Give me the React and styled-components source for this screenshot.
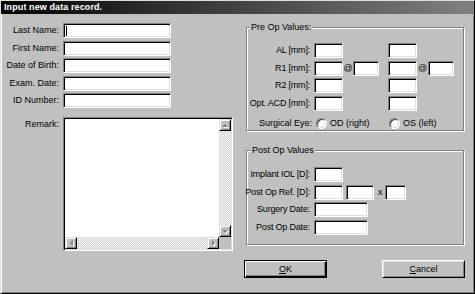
import React from 'react';
import styled, { createGlobalStyle } from 'styled-components';

const GlobalStyle = createGlobalStyle`
  html, body {
    margin: 0;
    padding: 0;
    background: #c0c0c0;
  }
`;

const Window = styled.div`
  box-sizing: border-box;
  width: 475px;
  height: 294px;
  background: #c0c0c0;
  border: 1px solid;
  border-color: #dfdfdf #000 #000 #dfdfdf;
  box-shadow: inset 1px 1px #fff, inset -1px -1px #808080;
  display: flex;
  flex-direction: column;
  font-family: "Liberation Sans", Arial, sans-serif;
  font-size: 9px;
  color: #000;
`;

const TitleBar = styled.div`
  height: 13px;
  line-height: 13px;
  padding-left: 3px;
  background: linear-gradient(90deg, #000 0%, #2a2a2a 30%, #808080 100%);
  color: #fff;
  font-weight: bold;
  font-size: 9px;
  letter-spacing: 0.1px;
  white-space: nowrap;
`;

const Body = styled.div`
  display: flex;
  gap: 13px;
  padding-top: 9px;
`;

const LeftCol = styled.div`
  display: grid;
  grid-template-columns: 58px 170px;
  grid-template-rows: repeat(5, 15px) 134px;
  column-gap: 4px;
  row-gap: 2.5px;
`;

const Label = styled.div`
  display: flex;
  justify-content: flex-end;
  white-space: nowrap;
  line-height: 11px;
  align-self: ${p => (p.$top ? 'start' : 'center')};
  padding-right: ${p => p.$pad || 0}px;
  margin-top: ${p => p.$mt || 0}px;
  letter-spacing: ${p => p.$ls || 0}px;
`;

const Field = styled.div`
  box-sizing: border-box;
  width: ${p => p.$w}px;
  height: 15px;
  background: #fff;
  border: 1px solid;
  border-color: #808080 #fff #fff #808080;
  box-shadow: inset 1px 1px #000, inset -1px -1px #dfdfdf;
  display: flex;
  align-items: center;
  margin-left: ${p => p.$ml || 0}px;
`;

const Caret = styled.span`
  width: 1px;
  height: 10px;
  margin-left: 2px;
  background: #000;
`;

const RemarkBox = styled.div`
  box-sizing: border-box;
  width: 170px;
  height: 134px;
  margin-top: 6.5px;
  padding: 1px;
  background: #fff;
  border: 1px solid;
  border-color: #808080 #fff #fff #808080;
  box-shadow: inset 1px 1px #000, inset -1px -1px #dfdfdf;
  display: grid;
  grid-template-columns: 1fr 12px;
  grid-template-rows: 1fr 12px;
`;

const VScroll = styled.div`
  display: flex;
  flex-direction: column;
`;

const HScroll = styled.div`
  display: flex;
`;

const Track = styled.div`
  flex: 1;
  background: repeating-conic-gradient(#d4d4d4 0 25%, #f4f4f4 0 50%) 0 0 / 2px 2px;
`;

const Corner = styled.div`
  background: #c0c0c0;
`;

const ScrollBtn = styled.div`
  box-sizing: border-box;
  width: 12px;
  height: 12px;
  background: #c0c0c0;
  border: 1px solid;
  border-color: #dfdfdf #000 #000 #dfdfdf;
  box-shadow: inset 1px 1px #fff, inset -1px -1px #808080;
  display: flex;
  align-items: center;
  justify-content: center;
`;

const arrowBorders = {
  up: 'border-left: 3px solid transparent; border-right: 3px solid transparent; border-bottom: 3px solid #808080;',
  down: 'border-left: 3px solid transparent; border-right: 3px solid transparent; border-top: 3px solid #808080;',
  left: 'border-top: 3px solid transparent; border-bottom: 3px solid transparent; border-right: 3px solid #808080;',
  right: 'border-top: 3px solid transparent; border-bottom: 3px solid transparent; border-left: 3px solid #808080;',
};

const Arrow = styled.span`
  width: 0;
  height: 0;
  ${p => arrowBorders[p.$dir]}
  filter: drop-shadow(1px 1px 0 #fff);
`;

const RightCol = styled.div`
  display: flex;
  flex-direction: column;
  width: 218px;
`;

const GroupBox = styled.div`
  position: relative;
  margin-top: ${p => p.$mt}px;
  padding: ${p => p.$pad};
  border: 1px solid #808080;
  box-shadow: inset 1px 1px #fff, 1px 1px #fff;
`;

const Legend = styled.span`
  position: absolute;
  top: -6px;
  left: ${p => p.$left}px;
  padding: 0 1px;
  line-height: 11px;
  background: #c0c0c0;
  white-space: nowrap;
`;

const PreGrid = styled.div`
  display: grid;
  grid-template-columns: 65px 29px 10px 26px 9px 29px 11px 26px;
  grid-template-rows: repeat(4, 15px) 13px;
  row-gap: 2.5px;
`;

const At = styled.div`
  align-self: center;
  text-align: center;
  line-height: 11px;
  font-size: 9px;
`;

const RadioCell = styled.label`
  grid-column: ${p => p.$col};
  display: flex;
  align-items: center;
  gap: 3px;
  padding-left: ${p => p.$pl}px;
  margin-top: 7.5px;
  white-space: nowrap;
`;

const RadioCircle = styled.span`
  box-sizing: border-box;
  width: 11px;
  height: 11px;
  border-radius: 50%;
  background: #fff;
  border: 1px solid;
  border-color: #808080 #fff #fff #808080;
  box-shadow: inset 1px 1px #404040, inset -1px -1px #dfdfdf;
`;

const EyeLabel = styled(Label)`
  margin-top: 7.5px;
`;

const PostGrid = styled.div`
  display: grid;
  grid-template-columns: 65px auto;
  grid-template-rows: repeat(4, 15px);
  row-gap: 2.5px;
`;

const FieldRow = styled.div`
  display: flex;
  align-items: center;
`;

const Times = styled.span`
  margin: 0 2px 0 4px;
  line-height: 11px;
`;

const ButtonRow = styled.div`
  display: flex;
  justify-content: space-between;
  margin: 15px -1px 0 -2px;
`;

const Button = styled.button`
  box-sizing: border-box;
  width: 83px;
  height: 18px;
  padding: 0;
  font-family: "Liberation Sans", Arial, sans-serif;
  font-size: 9px;
  color: #000;
  background: #c0c0c0;
  border: 1px solid;
  border-color: ${p => (p.$default ? '#000' : '#fff #000 #000 #fff')};
  box-shadow: ${p =>
    p.$default
      ? 'inset 1px 1px #fff, inset -1px -1px #000, inset -2px -2px #808080'
      : 'inset 1px 1px #dfdfdf, inset -1px -1px #808080'};
`;

const personFields = ['Last Name:', 'First Name:', 'Date of Birth:', 'Exam. Date:', 'ID Number:'];

const preRows = [
  { label: 'AL [mm]:', k: false },
  { label: 'R1 [mm]:', k: true },
  { label: 'R2 [mm]:', k: false },
  { label: 'Opt. ACD [mm]:', k: false },
];

const postRows = [
  { label: 'Implant IOL [D]:', fields: [29] },
  { label: 'Post Op Ref. [D]:', fields: [29, 28], cyl: 21 },
  { label: 'Surgery Date:', fields: [54] },
  { label: 'Post Op Date:', fields: [54] },
];

function PreRow({ label, k }) {
  return (
    <>
      <Label $pad={4} $ls={-0.2}>{label}</Label>
      <Field $w={29} />
      {k ? <At>@</At> : <span />}
      {k ? <Field $w={26} /> : <span />}
      <span />
      <Field $w={29} />
      {k ? <At>@</At> : <span />}
      {k ? <Field $w={26} /> : <span />}
    </>
  );
}

export default function App() {
  return (
    <>
      <GlobalStyle />
      <Window>
        <TitleBar>Input new data record.</TitleBar>
        <Body>
          <LeftCol>
            {personFields.map((f, i) => (
              <React.Fragment key={f}>
                <Label>{f}</Label>
                <Field $w={108}>{i === 0 && <Caret />}</Field>
              </React.Fragment>
            ))}
            <Label $top $mt={8.5}>Remark:</Label>
            <RemarkBox>
              <div />
              <VScroll>
                <ScrollBtn><Arrow $dir="up" /></ScrollBtn>
                <Track />
                <ScrollBtn><Arrow $dir="down" /></ScrollBtn>
              </VScroll>
              <HScroll>
                <ScrollBtn><Arrow $dir="left" /></ScrollBtn>
                <Track />
                <ScrollBtn><Arrow $dir="right" /></ScrollBtn>
              </HScroll>
              <Corner />
            </RemarkBox>
          </LeftCol>

          <RightCol>
            <GroupBox $mt={4} $pad="15px 0 4px 2px">
              <Legend $left={3}>Pre Op Values:</Legend>
              <PreGrid>
                {preRows.map(r => (
                  <PreRow key={r.label} {...r} />
                ))}
                <EyeLabel $pad={2}>Surgical Eye:</EyeLabel>
                <RadioCell $col="2 / 6" $pl={2}>
                  <RadioCircle />
                  OD (right)
                </RadioCell>
                <RadioCell $col="6 / 9" $pl={1}>
                  <RadioCircle />
                  OS (left)
                </RadioCell>
              </PreGrid>
            </GroupBox>

            <GroupBox $mt={19} $pad="16px 0 9px 2px">
              <Legend $left={4}>Post Op Values</Legend>
              <PostGrid>
                {postRows.map(r => (
                  <React.Fragment key={r.label}>
                    <Label $pad={4} $ls={-0.2}>{r.label}</Label>
                    <FieldRow>
                      {r.fields.map((w, i) => (
                        <Field key={i} $w={w} $ml={i ? 3 : 0} />
                      ))}
                      {r.cyl && (
                        <>
                          <Times>x</Times>
                          <Field $w={r.cyl} />
                        </>
                      )}
                    </FieldRow>
                  </React.Fragment>
                ))}
              </PostGrid>
            </GroupBox>

            <ButtonRow>
              <Button $default><u>O</u>K</Button>
              <Button><u>C</u>ancel</Button>
            </ButtonRow>
          </RightCol>
        </Body>
      </Window>
    </>
  );
}
